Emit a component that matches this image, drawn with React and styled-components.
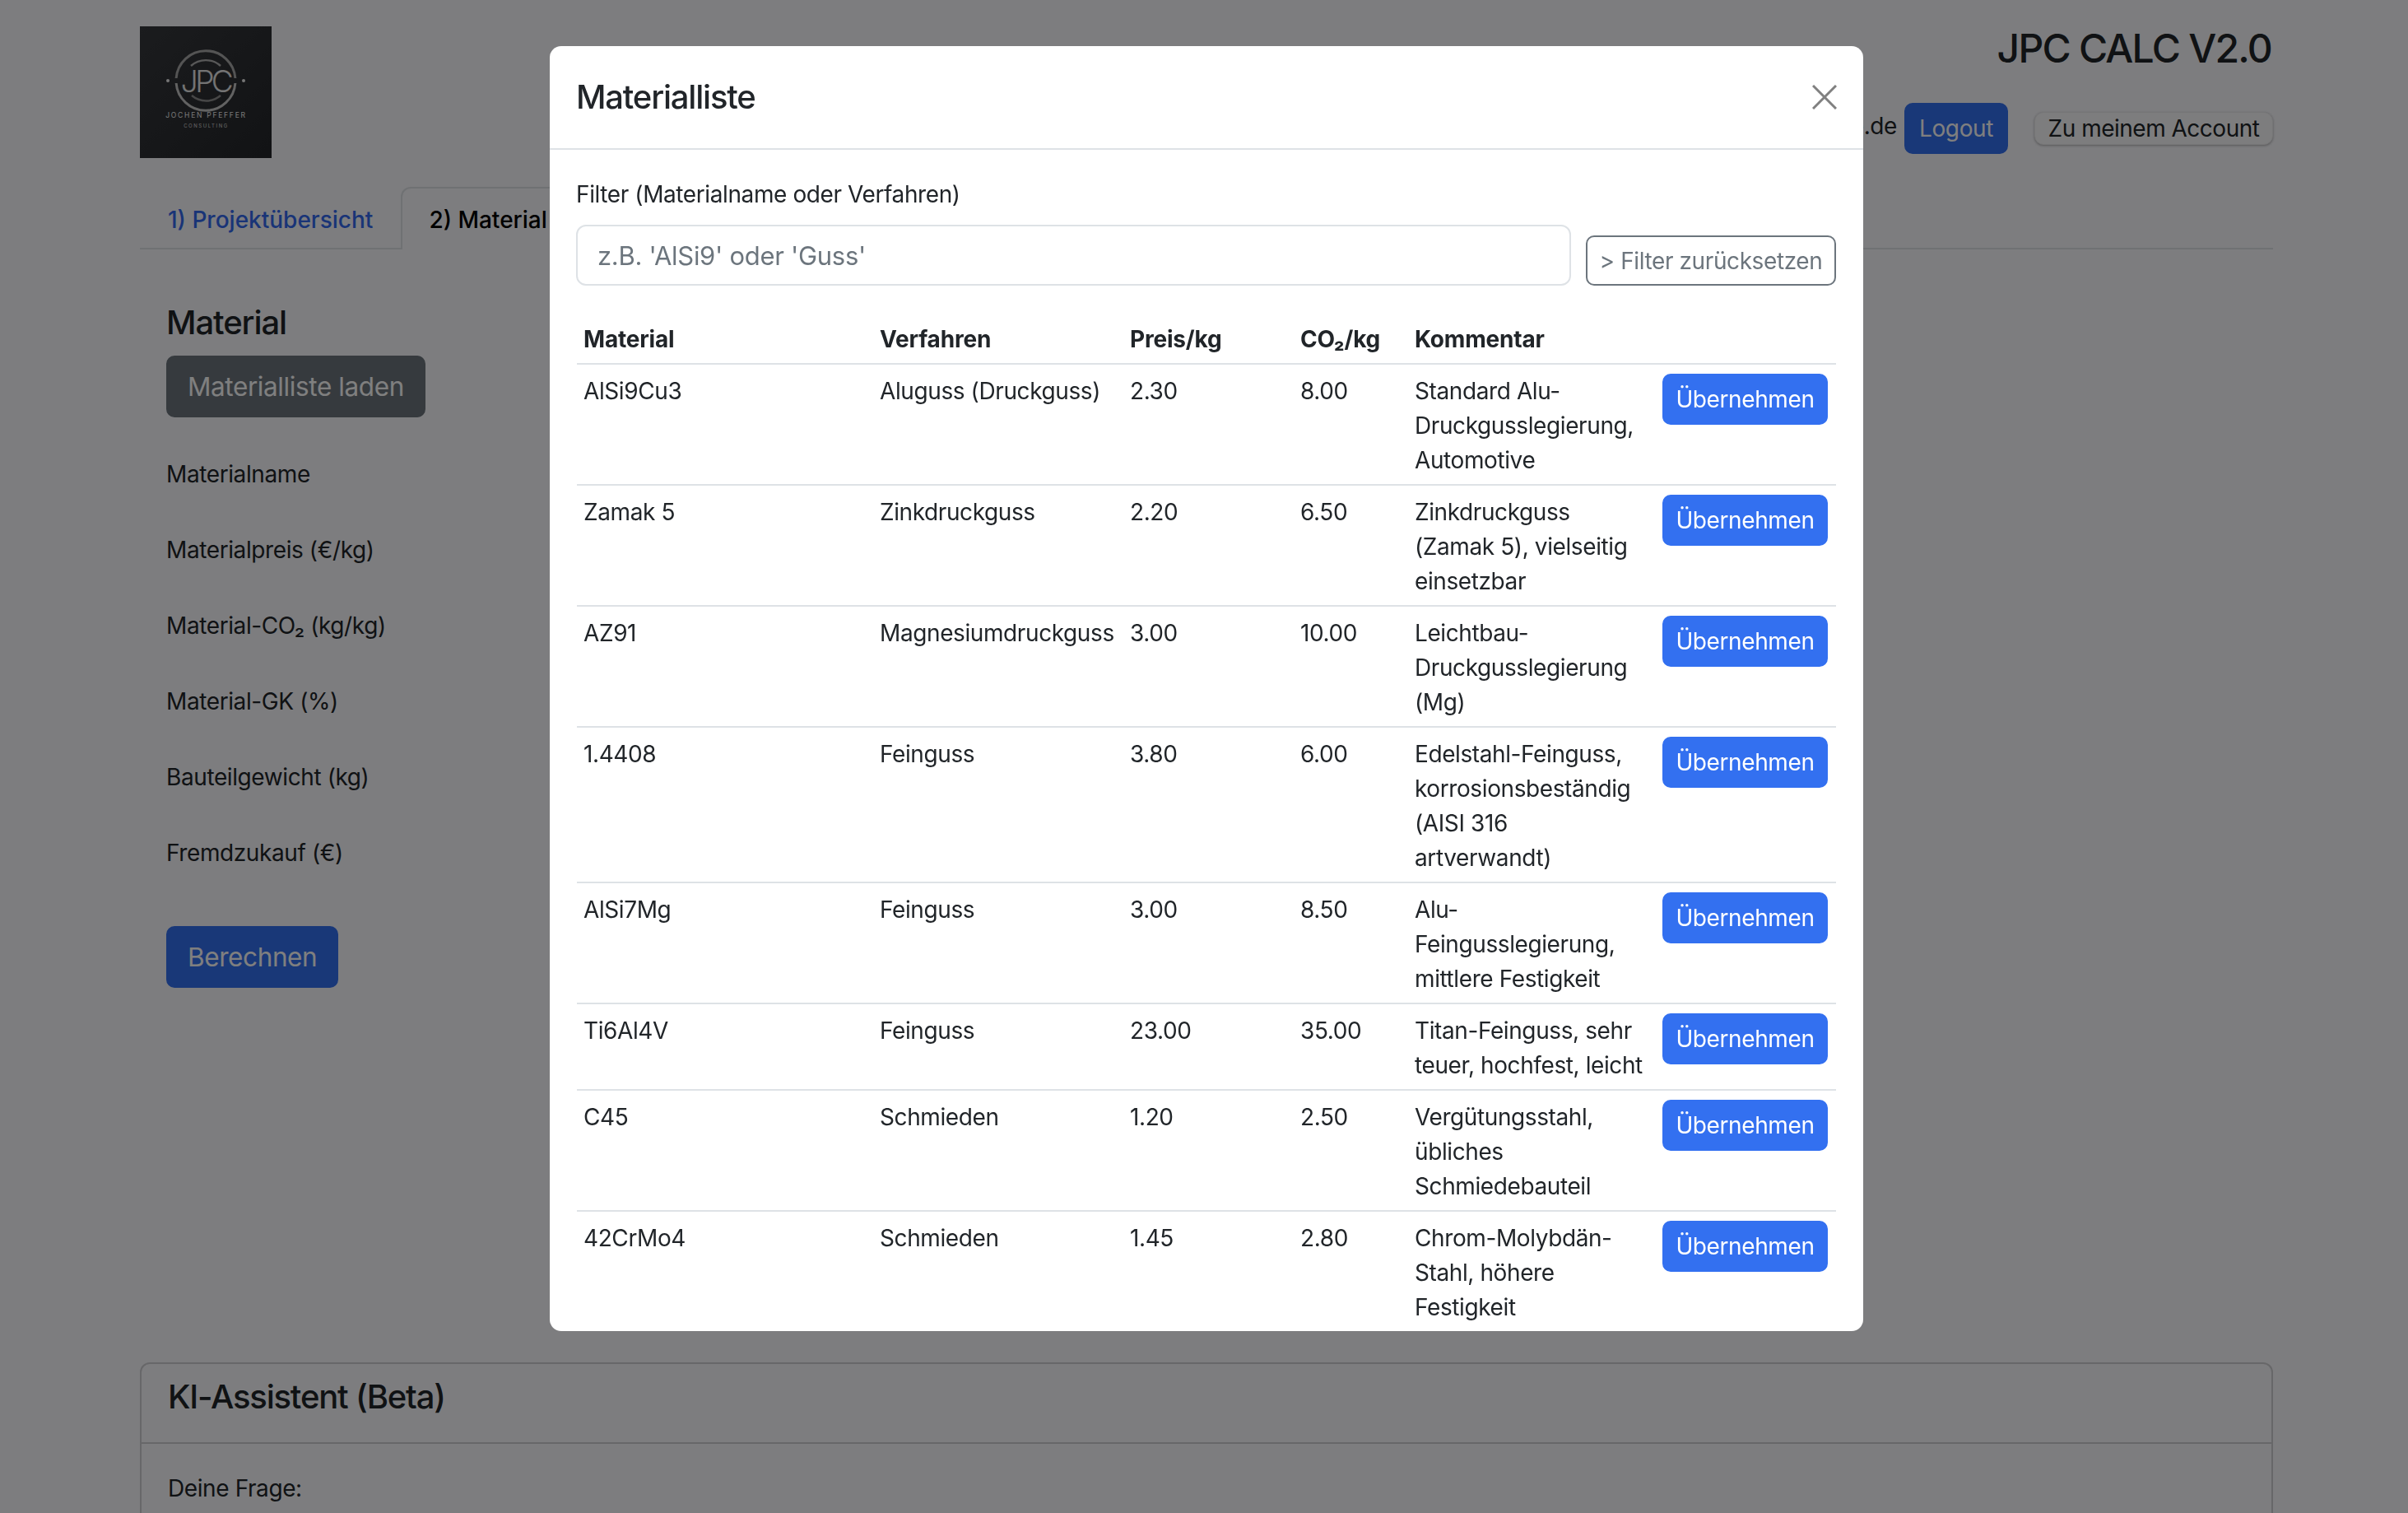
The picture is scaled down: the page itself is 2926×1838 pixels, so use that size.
import React from "react";
import styled, { createGlobalStyle } from "styled-components";

const materials = [
  ["AlSi9Cu3", "Aluguss (Druckguss)", "2.30", "8.00", "Standard Alu-Druckgusslegierung, Automotive"],
  ["Zamak 5", "Zinkdruckguss", "2.20", "6.50", "Zinkdruckguss (Zamak 5), vielseitig einsetzbar"],
  ["AZ91", "Magnesiumdruckguss", "3.00", "10.00", "Leichtbau-Druckgusslegierung (Mg)"],
  ["1.4408", "Feinguss", "3.80", "6.00", "Edelstahl-Feinguss, korrosionsbeständig (AISI 316 artverwandt)"],
  ["AlSi7Mg", "Feinguss", "3.00", "8.50", "Alu-Feingusslegierung, mittlere Festigkeit"],
  ["Ti6Al4V", "Feinguss", "23.00", "35.00", "Titan-Feinguss, sehr teuer, hochfest, leicht"],
  ["C45", "Schmieden", "1.20", "2.50", "Vergütungsstahl, übliches Schmiedebauteil"],
  ["42CrMo4", "Schmieden", "1.45", "2.80", "Chrom-Molybdän-Stahl, höhere Festigkeit"],
];

const fieldLabels = [
  "Materialname",
  "Materialpreis (€/kg)",
  "Material-CO₂ (kg/kg)",
  "Material-GK (%)",
  "Bauteilgewicht (kg)",
  "Fremdzukauf (€)",
];

const columnWidths = [360, 304, 207, 139, 301, 219];

const GlobalStyle = createGlobalStyle`
  html, body {
    margin: 0;
    padding: 0;
    background: #fafafe;
  }
  body {
    font-family: Inter, "Liberation Sans", sans-serif;
    font-size: 28px;
    line-height: 42px;
    color: #212529;
    letter-spacing: -0.4px;
  }
  * {
    box-sizing: border-box;
  }
`;

const Page = styled.div`
  height: 1838px;
  overflow: hidden;
  padding: 32px 164px 0 170px;
`;

const Header = styled.header`
  display: flex;
  justify-content: space-between;
`;

const Logo = styled.svg`
  display: block;
  width: 160px;
  height: 160px;
`;

const HeaderRight = styled.div`
  display: flex;
  flex-direction: column;
  align-items: flex-end;
`;

const AppTitle = styled.h1`
  margin: -2px 2px 0 0;
  font-size: 48px;
  line-height: 58px;
  font-weight: 500;
  letter-spacing: -1.75px;
`;

const UserRow = styled.div`
  display: flex;
  align-items: center;
  margin-top: 37px;
`;

const UserMail = styled.span`
  margin: -6px 9px 0 0;
`;

const Button = styled.button`
  font-family: inherit;
  letter-spacing: inherit;
  border-radius: 10px;
  border: 2px solid ${(p) => p.$color};
  background: ${(p) => (p.$outline ? "transparent" : p.$color)};
  color: ${(p) => (p.$outline ? p.$color : "#fff")};
`;

const LogoutButton = styled(Button)`
  width: 126px;
  height: 62px;
  padding: 0;
  font-size: 28px;
`;

const AccountButton = styled.button`
  width: 290px;
  height: 40px;
  margin-left: 32px;
  padding: 0;
  font-family: inherit;
  font-size: 28px;
  letter-spacing: -0.5px;
  color: #212529;
  background: #fbfbfc;
  border: 1px solid #ececee;
  border-radius: 11px;
  box-shadow: 0 1px 3px rgba(0, 0, 0, 0.3);
`;

const Tabs = styled.nav`
  display: flex;
  height: 76px;
  margin-top: 35px;
  border-bottom: 2px solid #dee2e6;
`;

const Tab = styled.div`
  height: 76px;
  padding: 0 32px;
  line-height: 76px;
  white-space: nowrap;
  font-weight: 500;
  letter-spacing: 0;
  color: ${(p) => (p.$active ? "#000" : "#3369ef")};
  background: ${(p) => (p.$active ? "#fafafe" : "transparent")};
  border: 2px solid ${(p) => (p.$active ? "#dee2e6" : "transparent")};
  border-bottom: 0;
  border-radius: 12px 12px 0 0;
`;

const Pane = styled.section`
  padding-left: 32px;
`;

const PaneTitle = styled.h2`
  margin: 65px 0 16px;
  font-size: 40px;
  line-height: 48px;
  font-weight: 500;
  letter-spacing: -1.1px;
`;

const LargeButton = styled(Button)`
  display: block;
  height: 75px;
  padding: 0 24px;
  font-size: 31.5px;
`;

const Fields = styled.div`
  display: flex;
  flex-direction: column;
  gap: 50px;
  margin: 48px 0 68px;
`;

const FieldLabel = styled.label`
  display: block;
`;

const Card = styled.section`
  margin-top: 455px;
  border: 2px solid #cfcfd2;
  border-radius: 12px;
`;

const CardHeader = styled.div`
  height: 97px;
  padding: 0 32px;
  border-bottom: 2px solid #cfcfd2;
  font-size: 40px;
  line-height: 80px;
  font-weight: 500;
  letter-spacing: -1.2px;
`;

const CardBody = styled.div`
  padding: 33px 32px;
`;

const Backdrop = styled.div`
  position: fixed;
  inset: 0;
  display: flex;
  justify-content: center;
  align-items: flex-start;
  padding-top: 56px;
  background: rgba(0, 0, 0, 0.5);
`;

const Modal = styled.div`
  width: 1596px;
  height: 1561px;
  margin-left: 6px;
  overflow: hidden;
  background: #fff;
  border-radius: 14px;
`;

const ModalHeader = styled.div`
  display: flex;
  align-items: center;
  justify-content: space-between;
  height: 126px;
  padding: 0 32px;
  border-bottom: 2px solid #dee2e6;
`;

const ModalTitle = styled.h5`
  margin: 0;
  font-size: 40px;
  line-height: 48px;
  font-weight: 500;
  letter-spacing: -1.2px;
`;

const CloseIcon = styled.svg`
  display: block;
  width: 30px;
  height: 30px;
  stroke: #808080;
  stroke-width: 3;
`;

const ModalBody = styled.div`
  padding: 33px 33px 0 32px;
`;

const FilterRow = styled.div`
  display: flex;
  align-items: flex-end;
  gap: 18px;
`;

const FilterField = styled.div`
  flex: 1;
`;

const FilterLabel = styled.label`
  display: block;
  margin-bottom: 16px;
`;

const FilterInput = styled.input`
  display: block;
  width: 100%;
  height: 74px;
  padding: 0 24px;
  font-family: inherit;
  font-size: 31px;
  letter-spacing: -0.3px;
  border: 2px solid #dee2e6;
  border-radius: 12px;
  &::placeholder {
    color: #6c757d;
    opacity: 1;
  }
`;

const ResetButton = styled(Button)`
  width: 304px;
  height: 61px;
  padding: 0;
  font-size: 28px;
`;

const Table = styled.table`
  width: 1530px;
  margin: 34px 0 0 1px;
  border-collapse: collapse;
  table-layout: fixed;
`;

const HeadCell = styled.th`
  padding: 10px 8px 8px;
  text-align: left;
  font-weight: 700;
  letter-spacing: -0.2px;
  border-bottom: 2px solid #dee2e6;
`;

const Row = styled.tr`
  border-bottom: 2px solid #dee2e6;
`;

const Cell = styled.td`
  padding: 11px 8px 8px;
  vertical-align: top;
`;

const PickCell = styled(Cell)`
  padding: 11px 10px 0 8px;
`;

const PickButton = styled(Button)`
  display: block;
  width: 201px;
  height: 62px;
  padding: 0;
  font-size: 28px;
`;

const JpcLogo = () => (
  <Logo viewBox="0 0 160 160">
    <defs>
      <linearGradient id="logoBg" x1="0" y1="0" x2="1" y2="1">
        <stop offset="0" stopColor="#36383c" />
        <stop offset="1" stopColor="#24262a" />
      </linearGradient>
    </defs>
    <rect width="160" height="160" fill="url(#logoBg)" />
    <g fill="none" strokeWidth="3">
      <path d="M44.1 63A36 36 0 0 1 115.9 63" stroke="#a8a8a8" />
      <path d="M44.1 69A36 36 0 0 0 115.9 69" stroke="#c4c4c4" />
      <path d="M62 48A27 27 0 0 1 98 48" strokeWidth="2.4" stroke="#b0b0b0" />
      <path d="M63 84A27 27 0 0 0 98 84" strokeWidth="2.4" stroke="#8e8e8e" />
    </g>
    <circle cx="34" cy="66" r="2" fill="#ececec" />
    <circle cx="126" cy="66" r="2" fill="#ececec" />
    <text x="80" y="80" textAnchor="middle" fontFamily="Inter, sans-serif" fontSize="37" fontWeight="300" letterSpacing="-3.6" fill="#e6e6e6">JPC</text>
    <text x="80.5" y="111" textAnchor="middle" fontFamily="Inter, sans-serif" fontSize="8.5" letterSpacing="1.75" fill="#f0f0f0">JOCHEN PFEFFER</text>
    <text x="80.5" y="122.5" textAnchor="middle" fontFamily="Inter, sans-serif" fontSize="6" letterSpacing="1.55" fill="#d0d0d0">CONSULTING</text>
  </Logo>
);

const MaterialRow = ({ item }) => (
  <Row>
    {item.map((value) => (
      <Cell key={value}>{value}</Cell>
    ))}
    <PickCell>
      <PickButton $color="#3370f0">Übernehmen</PickButton>
    </PickCell>
  </Row>
);

export default function App() {
  return (
    <>
      <GlobalStyle />
      <Page>
        <Header>
          <JpcLogo />
          <HeaderRight>
            <AppTitle>JPC CALC V2.0</AppTitle>
            <UserRow>
              <UserMail>user@example.de</UserMail>
              <LogoutButton $color="#3370f0">Logout</LogoutButton>
              <AccountButton>Zu meinem Account</AccountButton>
            </UserRow>
          </HeaderRight>
        </Header>
        <Tabs>
          <Tab>1) Projektübersicht</Tab>
          <Tab $active>2) Material</Tab>
        </Tabs>
        <Pane>
          <PaneTitle>Material</PaneTitle>
          <LargeButton $color="#6c757d">Materialliste laden</LargeButton>
          <Fields>
            {fieldLabels.map((label) => (
              <FieldLabel key={label}>{label}</FieldLabel>
            ))}
          </Fields>
          <LargeButton $color="#3370f0">Berechnen</LargeButton>
        </Pane>
        <Card>
          <CardHeader>KI-Assistent (Beta)</CardHeader>
          <CardBody>Deine Frage:</CardBody>
        </Card>
      </Page>
      <Backdrop>
        <Modal>
          <ModalHeader>
            <ModalTitle>Materialliste</ModalTitle>
            <CloseIcon viewBox="0 0 30 30">
              <path d="M1 1L29 29M29 1L1 29" />
            </CloseIcon>
          </ModalHeader>
          <ModalBody>
            <FilterRow>
              <FilterField>
                <FilterLabel>Filter (Materialname oder Verfahren)</FilterLabel>
                <FilterInput placeholder="z.B. 'AlSi9' oder 'Guss'" />
              </FilterField>
              <ResetButton $color="#6c757d" $outline>&gt; Filter zurücksetzen</ResetButton>
            </FilterRow>
            <Table>
              <colgroup>
                {columnWidths.map((width, i) => (
                  <col key={i} width={width} />
                ))}
              </colgroup>
              <thead>
                <tr>
                  <HeadCell>Material</HeadCell>
                  <HeadCell>Verfahren</HeadCell>
                  <HeadCell>Preis/kg</HeadCell>
                  <HeadCell>CO₂/kg</HeadCell>
                  <HeadCell>Kommentar</HeadCell>
                  <HeadCell />
                </tr>
              </thead>
              <tbody>
                {materials.map((item) => (
                  <MaterialRow key={item[0]} item={item} />
                ))}
              </tbody>
            </Table>
          </ModalBody>
        </Modal>
      </Backdrop>
    </>
  );
}
